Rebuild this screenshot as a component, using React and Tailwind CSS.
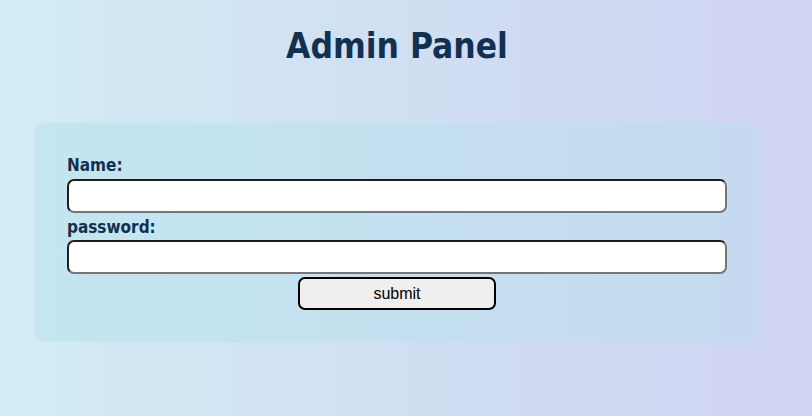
export default function App() {
  return (
    <div
      className="w-[812px] h-[416px] overflow-hidden bg-[linear-gradient(to_right,#d2ecf4,#d0dcf2_60%,#d1d5f3)]"
      style={{ fontFamily: '"DejaVu Sans Condensed", "DejaVu Sans", Verdana, sans-serif' }}
    >
      <div className="w-[794px]">
        <h1 className="pt-[26px] text-center text-[35px] leading-[41px] font-bold text-[#12304f]">
          Admin Panel
        </h1>
        <div className="ml-[35px] mt-[56px] w-[724px] h-[219px] rounded-[10px] bg-[linear-gradient(to_right,#c4e6f0,#c5daf0)] px-[32px] pt-[32px]">
          <div className="w-[660px] flex flex-col">
            <label className="text-[17px] leading-[20px] font-bold text-[#12304f]">Name:</label>
            <input
              type="text"
              className="mt-[4px] h-[34px] w-full rounded-[7px] bg-white border-2 border-t-[#1d1d1d] border-l-[#1d1d1d] border-b-[#767676] border-r-[#767676] outline-none"
            />
            <label className="mt-[4px] text-[17px] leading-[20px] font-bold text-[#12304f]">password:</label>
            <input
              type="password"
              className="mt-[3px] h-[34px] w-full rounded-[7px] bg-white border-2 border-t-[#1d1d1d] border-l-[#1d1d1d] border-b-[#767676] border-r-[#767676] outline-none"
            />
            <div className="flex justify-center mt-[3px]">
              <button
                className="w-[198px] h-[33px] rounded-[7px] border-2 border-black bg-[#efefef] text-[16px] text-black"
                style={{ fontFamily: '"Liberation Sans", Arial, sans-serif' }}
              >
                submit
              </button>
            </div>
          </div>
        </div>
      </div>
    </div>
  );
}
